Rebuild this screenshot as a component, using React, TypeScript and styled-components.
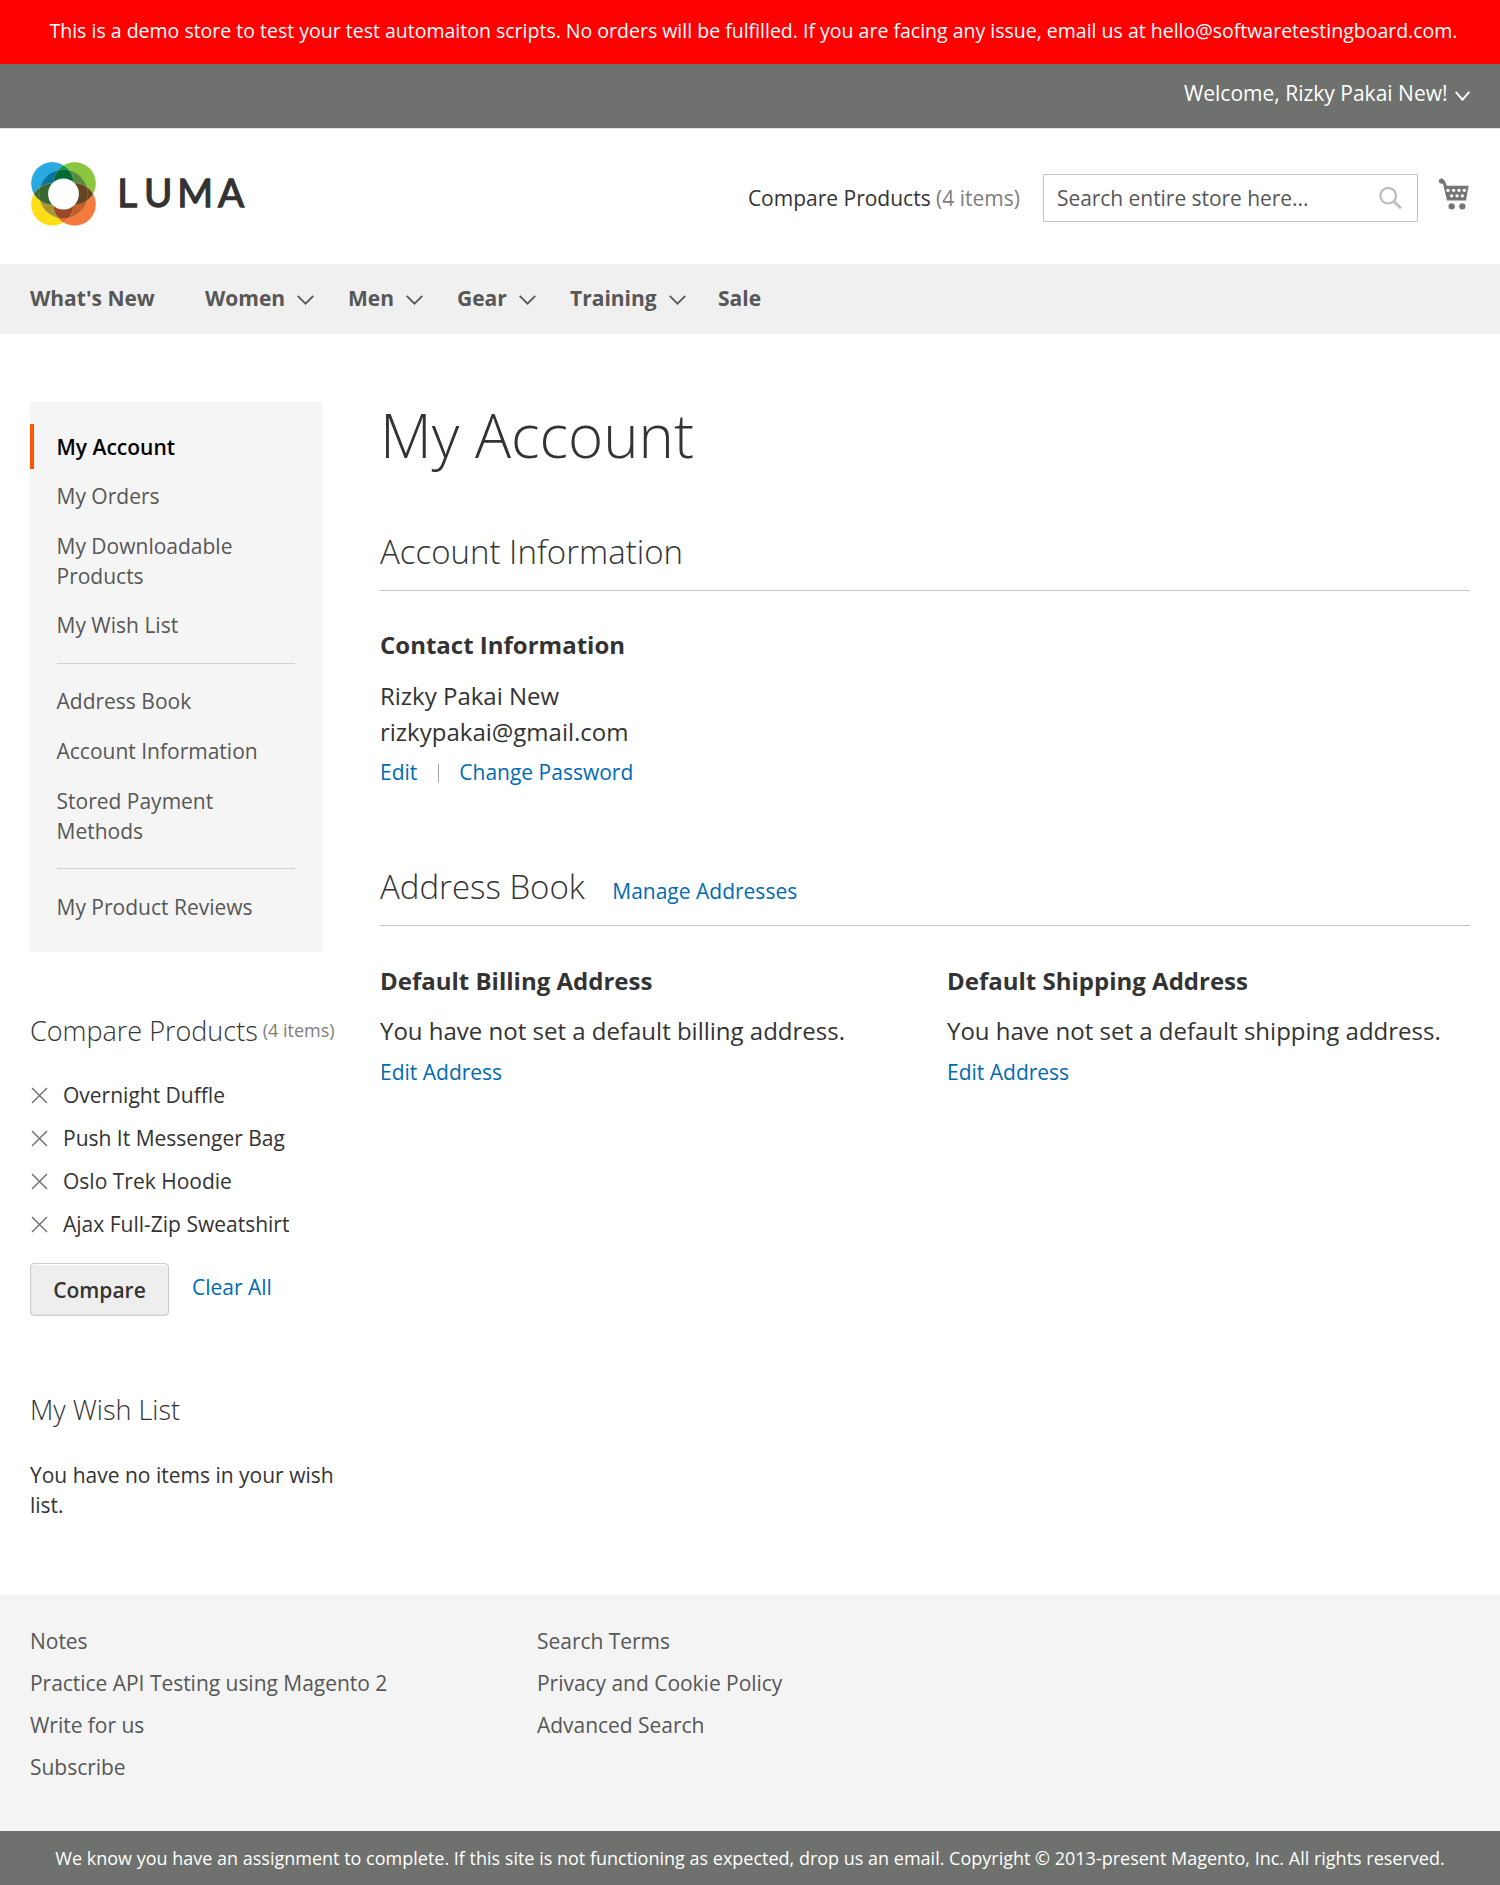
import React from "react";
import styled, { createGlobalStyle } from "styled-components";

const GlobalStyle = createGlobalStyle`
  *, *::before, *::after { box-sizing: border-box; }
  body {
    margin: 0;
    background: #fff;
    color: #333;
    font-family: "Open Sans", "Noto Sans", sans-serif;
    font-size: 21px;
    line-height: 30px;
  }
  ul { list-style: none; margin: 0; padding: 0; }
  h1, h2, h3, h4, p { margin: 0; font-weight: inherit; font-size: inherit; }
  a { color: inherit; text-decoration: none; }
`;

const Page = styled.div`
  width: 1500px;
  height: 1885px;
  display: flex;
  flex-direction: column;
  overflow: hidden;
`;

const DemoNotice = styled.div`
  height: 64px;
  padding-left: 7px;
  background: #ff0000;
  color: #fff;
  font-size: 19.5px;
  line-height: 61px;
  text-align: center;
  white-space: nowrap;
`;

const Panel = styled.div`
  height: 65px;
  padding: 14px 30px 0;
  display: flex;
  justify-content: flex-end;
  gap: 7.5px;
  background: #6e716e;
  border-bottom: 1px solid #e0e0e0;
  color: #fff;
  line-height: 30px;
  white-space: nowrap;
  svg { margin-top: 13px; }
`;

const Header = styled.header`
  height: 135px;
  padding: 0 30px;
  display: flex;
`;

const Logo = styled.a`
  display: block;
  margin-top: 31px;
  margin-right: auto;
  height: 68px;
  svg { display: block; }
`;

const CompareLink = styled.a`
  margin: 54px 23px 0 0;
  white-space: nowrap;
  span { color: #7d7d7d; }
`;

const SearchBox = styled.div`
  width: 375px;
  height: 48px;
  margin: 45px 19px 0 0;
  padding: 0 14px 0 13px;
  display: flex;
  align-items: center;
  justify-content: space-between;
  border: 1px solid #c2c2c2;
  border-radius: 1px;
  color: #575757;
  letter-spacing: -0.05px;
`;

const CartLink = styled.a`
  width: 33px;
  margin-top: 48px;
  svg { display: block; }
`;

const Nav = styled.nav`
  height: 70px;
  padding: 0 30px;
  display: flex;
  background: #f0f0f0;
  color: #575757;
  font-weight: 700;
  line-height: 69px;
`;

const NavItem = styled.a<{ $width: number }>`
  width: ${(p) => p.$width}px;
  display: flex;
  gap: 12px;
  white-space: nowrap;
  svg { margin-top: 31px; }
`;

const Columns = styled.main`
  flex: 1;
  padding: 68px 30px 0;
  display: flex;
`;

const Sidebar = styled.aside`
  width: 350px;
  flex: none;
`;

const AccountNav = styled.ul`
  width: 292px;
  height: 550px;
  padding: 22.1px 0;
  background: #f5f5f5;
  color: #575757;
`;

const AccountItem = styled.li<{ $current?: boolean }>`
  padding: 7.5px 27px 7.5px ${(p) => (p.$current ? 22.5 : 26.5)}px;
  border-left: ${(p) => (p.$current ? "4px solid #ff5501" : "none")};
  color: ${(p) => (p.$current ? "#000" : "inherit")};
  font-weight: ${(p) => (p.$current ? 600 : 400)};
  & + & { margin-top: 4.6px; }
`;

const Delimiter = styled.li`
  height: 1px;
  margin: 15.45px 27px 14.55px;
  background: #d1d1d1;
`;

const BlockTitle = styled.h3<{ $top: number }>`
  margin-top: ${(p) => p.$top}px;
  font-size: 27px;
  font-weight: 300;
  line-height: 36px;
  white-space: nowrap;
  small {
    margin-left: 5px;
    color: #7d7d7d;
    font-size: 18px;
    font-weight: 400;
    vertical-align: 4px;
    line-height: 1;
  }
`;

const CompareList = styled.ul`
  margin-top: 31px;
`;

const CompareItem = styled.li`
  height: 43px;
  display: flex;
  align-items: flex-start;
  gap: 15.5px;
  svg { margin: 7px 0 0 0.5px; }
`;

const CompareActions = styled.div`
  margin-top: 11px;
  display: flex;
  gap: 23px;
  a { margin-top: 9px; }
`;

const CompareButton = styled.button`
  width: 139px;
  height: 53px;
  padding: 0;
  background: #eee;
  border: 1px solid #ccc;
  border-radius: 4px;
  box-shadow: inset 0 1px 0 0 #fff, inset 0 -1px 0 0 rgba(204, 204, 204, 0.3);
  color: #333;
  font: 600 21px/24px "Open Sans", "Noto Sans", sans-serif;
`;

const TextLink = styled.a`
  color: #006bb4;
`;

const WishText = styled.p`
  width: 305px;
  margin-top: 32px;
`;

const Content = styled.section`
  flex: 1;
`;

const PageTitle = styled.h1`
  font-size: 60px;
  font-weight: 300;
  line-height: 66px;
`;

const SectionTitle = styled.h2<{ $top: number }>`
  height: 57px;
  margin-top: ${(p) => p.$top}px;
  display: flex;
  align-items: baseline;
  gap: 27.5px;
  border-bottom: 1px solid #c6c6c6;
  font-size: 33px;
  font-weight: 300;
  line-height: 36px;
  a { font-size: 21px; font-weight: 400; }
`;

const BoxTitle = styled.h4`
  font-size: 24px;
  font-weight: 700;
  line-height: 36px;
`;

const BoxText = styled.p`
  font-size: 24px;
  line-height: 36px;
  white-space: nowrap;
`;

const BoxActions = styled.div`
  display: flex;
  align-items: center;
`;

const Boxes = styled.div<{ $addresses?: boolean }>`
  display: grid;
  grid-template-columns: 567px 1fr;
  margin-top: ${(p) => (p.$addresses ? 37 : 36)}px;
  ${BoxTitle} { margin-bottom: ${(p) => (p.$addresses ? 14 : 15)}px; }
  ${BoxActions} { margin-top: ${(p) => (p.$addresses ? 8 : 7)}px; }
`;

const Separator = styled.span`
  width: 1px;
  height: 18px;
  margin: 2px 20.5px 0;
  background: #a6a6a6;
`;

const Footer = styled.footer`
  height: 236px;
  padding: 31px 30px 0;
  display: grid;
  grid-template-columns: 507px 1fr;
  background: #f4f4f4;
  color: #575757;
`;

const FooterLink = styled.li`
  height: 42px;
  line-height: 30px;
  letter-spacing: -0.03px;
`;

const Copyright = styled.div`
  height: 54px;
  background: #6e716e;
  color: #fff;
  font-size: 18px;
  line-height: 54px;
  text-align: center;
  white-space: nowrap;
`;

function Chevron({ width = 17, height = 10, stroke = 1.7 }: { width?: number; height?: number; stroke?: number }) {
  return (
    <svg width={width} height={height} viewBox={`0 0 ${width} ${height}`} fill="none" stroke="currentColor" strokeWidth={stroke}>
      <path d={`M0.7 0.8 L${width / 2} ${height - 1.3} L${width - 0.7} 0.8`} />
    </svg>
  );
}

function RemoveIcon() {
  return (
    <svg width="17" height="17" viewBox="0 0 17 17" fill="none" stroke="#757575" strokeWidth="1.5">
      <path d="M1 1 L16 16 M16 1 L1 16" />
    </svg>
  );
}

function LumaLogo() {
  return (
    <svg width="222" height="68" viewBox="0 0 222 68">
      <defs>
        <clipPath id="tl"><circle cx="22.3" cy="23.3" r="21.2" /></clipPath>
        <clipPath id="bl"><circle cx="22.3" cy="44.5" r="21.2" /></clipPath>
        <clipPath id="tr"><circle cx="44.7" cy="23.3" r="21.2" /></clipPath>
        <clipPath id="mid"><circle cx="33.5" cy="34" r="24.5" /></clipPath>
      </defs>
      <circle cx="22.3" cy="23.3" r="21.2" fill="#27a9e1" />
      <circle cx="44.7" cy="23.3" r="21.2" fill="#8cc63f" />
      <circle cx="22.3" cy="44.5" r="21.2" fill="#ffde17" />
      <circle cx="44.7" cy="44.5" r="21.2" fill="#f47b3b" />
      <circle cx="44.7" cy="23.3" r="21.2" fill="#009c4b" clipPath="url(#tl)" />
      <circle cx="44.7" cy="44.5" r="21.2" fill="#f1672c" clipPath="url(#bl)" />
      <g clipPath="url(#mid)">
        <circle cx="22.3" cy="23.3" r="21.2" fill="#07759f" />
        <circle cx="44.7" cy="23.3" r="21.2" fill="#578a3d" />
        <circle cx="22.3" cy="44.5" r="21.2" fill="#a89534" />
        <circle cx="44.7" cy="44.5" r="21.2" fill="#c25d2e" />
      </g>
      <circle cx="22.3" cy="44.5" r="21.2" fill="#3a6832" clipPath="url(#tl)" />
      <circle cx="44.7" cy="44.5" r="21.2" fill="#654520" clipPath="url(#tr)" />
      <g clipPath="url(#mid)">
        <circle cx="44.7" cy="23.3" r="21.2" fill="#006934" clipPath="url(#tl)" />
        <circle cx="44.7" cy="44.5" r="21.2" fill="#9d4824" clipPath="url(#bl)" />
      </g>
      <g fill="none" stroke="#fff" strokeOpacity="0.28" strokeWidth="0.5">
        <circle cx="22.3" cy="23.3" r="21.2" />
        <circle cx="44.7" cy="23.3" r="21.2" />
        <circle cx="22.3" cy="44.5" r="21.2" />
        <circle cx="44.7" cy="44.5" r="21.2" />
        <circle cx="33.5" cy="34" r="24.5" />
      </g>
      <circle cx="33.5" cy="34" r="15.4" fill="#fff" />
      <text x="87.2 114 147.2 188" y="47.2" fontFamily="Lato" fontWeight="400" fontSize="38.6" fill="#333" stroke="#333" strokeWidth="1.3">LUMA</text>
    </svg>
  );
}

function SearchIcon() {
  return (
    <svg width="24.67" height="24" viewBox="114 316 74 72" fill="none" stroke="#bdbdbd">
      <circle cx="144.5" cy="345" r="23.5" strokeWidth="6.5" />
      <path d="M161 362 L183 383" strokeWidth="8" />
    </svg>
  );
}

function CartIcon() {
  const holes = [[323, 332], [340, 332], [356, 332], [372, 332], [334, 348.5], [350, 348.5], [366, 348.5]];
  return (
    <svg width="32.67" height="33.33" viewBox="290 292 98 100" fill="#757575">
      <circle cx="303" cy="304" r="7.5" />
      <path d="M302 297 L310 300 Q314 303 316 309 L319 318 L385 318 L377 362.5 L320 362.5 L308 312 L301 311 Z" />
      {holes.map(([x, y]) => (
        <circle key={`${x}-${y}`} cx={x} cy={y} r="5" fill="#fff" />
      ))}
      <circle cx="334" cy="380" r="9.5" />
      <circle cx="366" cy="380" r="9.5" />
    </svg>
  );
}

const navItems = [
  { label: "What's New", width: 175 },
  { label: "Women", width: 143, menu: true },
  { label: "Men", width: 109, menu: true },
  { label: "Gear", width: 113, menu: true },
  { label: "Training", width: 148, menu: true },
  { label: "Sale", width: 60 },
];

const accountGroups = [
  ["My Account", "My Orders", "My Downloadable Products", "My Wish List"],
  ["Address Book", "Account Information", "Stored Payment Methods"],
  ["My Product Reviews"],
];

const compared = ["Overnight Duffle", "Push It Messenger Bag", "Oslo Trek Hoodie", "Ajax Full-Zip Sweatshirt"];

const footerColumns = [
  ["Notes", "Practice API Testing using Magento 2", "Write for us", "Subscribe"],
  ["Search Terms", "Privacy and Cookie Policy", "Advanced Search"],
];

export default function App() {
  return (
    <>
      <GlobalStyle />
      <Page>
        <DemoNotice>
          This is a demo store to test your test automaiton scripts. No orders will be fulfilled. If you are facing any issue, email us at hello@softwaretestingboard.com.
        </DemoNotice>
        <Panel>
          <span>Welcome, Rizky Pakai New!</span>
          <Chevron width={15} height={10} stroke={2} />
        </Panel>
        <Header>
          <Logo href="#"><LumaLogo /></Logo>
          <CompareLink href="#">Compare Products <span>(4 items)</span></CompareLink>
          <SearchBox><span>Search entire store here...</span><SearchIcon /></SearchBox>
          <CartLink href="#"><CartIcon /></CartLink>
        </Header>
        <Nav>
          {navItems.map((item) => (
            <NavItem key={item.label} href="#" $width={item.width}>
              {item.label}
              {item.menu && <Chevron />}
            </NavItem>
          ))}
        </Nav>
        <Columns>
          <Sidebar>
            <AccountNav>
              {accountGroups.map((group, index) => (
                <React.Fragment key={group[0]}>
                  {index > 0 && <Delimiter />}
                  {group.map((label) => (
                    <AccountItem key={label} $current={label === "My Account"}>{label}</AccountItem>
                  ))}
                </React.Fragment>
              ))}
            </AccountNav>
            <BlockTitle $top={61}>Compare Products<small>(4 items)</small></BlockTitle>
            <CompareList>
              {compared.map((name) => (
                <CompareItem key={name}><RemoveIcon /><span>{name}</span></CompareItem>
              ))}
            </CompareList>
            <CompareActions>
              <CompareButton>Compare</CompareButton>
              <TextLink href="#">Clear All</TextLink>
            </CompareActions>
            <BlockTitle $top={76}>My Wish List</BlockTitle>
            <WishText>You have no items in your wish list.</WishText>
          </Sidebar>
          <Content>
            <PageTitle>My Account</PageTitle>
            <SectionTitle $top={66}>Account Information</SectionTitle>
            <Boxes>
              <div>
                <BoxTitle>Contact Information</BoxTitle>
                <BoxText>Rizky Pakai New<br />rizkypakai@gmail.com</BoxText>
                <BoxActions>
                  <TextLink href="#">Edit</TextLink>
                  <Separator />
                  <TextLink href="#">Change Password</TextLink>
                </BoxActions>
              </div>
            </Boxes>
            <SectionTitle $top={82}>Address Book<TextLink href="#">Manage Addresses</TextLink></SectionTitle>
            <Boxes $addresses>
              <div>
                <BoxTitle>Default Billing Address</BoxTitle>
                <BoxText>You have not set a default billing address.</BoxText>
                <BoxActions><TextLink href="#">Edit Address</TextLink></BoxActions>
              </div>
              <div>
                <BoxTitle>Default Shipping Address</BoxTitle>
                <BoxText>You have not set a default shipping address.</BoxText>
                <BoxActions><TextLink href="#">Edit Address</TextLink></BoxActions>
              </div>
            </Boxes>
          </Content>
        </Columns>
        <Footer>
          {footerColumns.map((links) => (
            <ul key={links[0]}>
              {links.map((label) => <FooterLink key={label}>{label}</FooterLink>)}
            </ul>
          ))}
        </Footer>
        <Copyright>
          We know you have an assignment to complete. If this site is not functioning as expected, drop us an email. Copyright © 2013-present Magento, Inc. All rights reserved.
        </Copyright>
      </Page>
    </>
  );
}
